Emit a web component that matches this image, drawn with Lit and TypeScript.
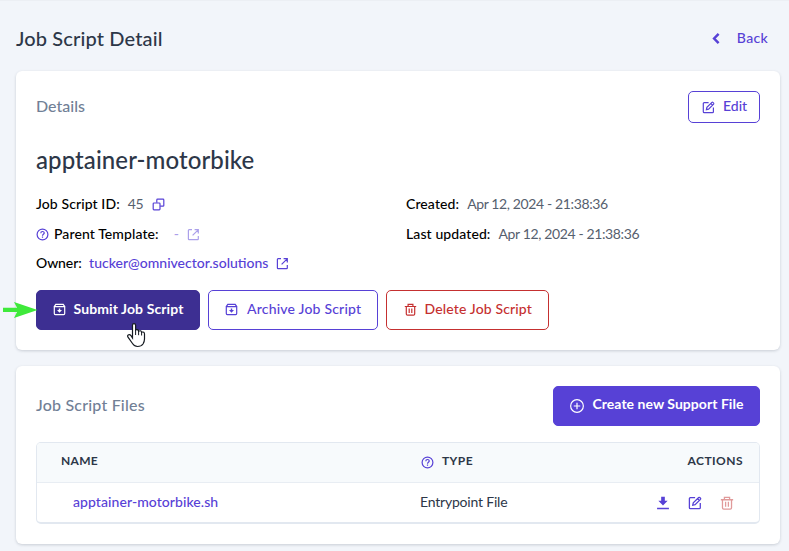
import { LitElement, html, css, svg } from "lit";
import { customElement } from "lit/decorators.js";

const icons: Record<string, unknown> = {
  back: svg`<path d="M8.6 1.8 4.1 6.5 8.6 11.2" stroke-width="2.5"/>`,
  edit: svg`<path d="M6.6 1.6H2.2Q1.3 1.6 1.3 2.5V10.8Q1.3 11.7 2.2 11.7H10.5Q11.4 11.7 11.4 10.8V6.6"/><path d="M4.4 8.6 4.9 6.4 9.9 1.4Q10.4 1 10.9 1.4L11.6 2.1Q12 2.6 11.6 3.1L6.6 8.1Z M8.9 2.6 10.5 4.2"/>`,
  archive: svg`<path d="M1.3 3.6V10.6Q1.3 11.6 2.3 11.6H10.7Q11.7 11.6 11.7 10.6V3.6Z"/><path d="M1.4 3.4 2.8 1.4H10.2L11.6 3.4"/><path d="M5.8 5.4H7.2V7H9L6.5 9.7 4 7H5.8Z" fill="currentColor" stroke="none"/>`,
  copy: svg`<rect x="1.2" y="5" width="6.8" height="6.8" rx=".8"/><path d="M4.8 4.8V2Q4.8 1.2 5.6 1.2H11Q11.8 1.2 11.8 2V7.4Q11.8 8.2 11 8.2H8.2"/>`,
  help: svg`<circle cx="6.5" cy="6.5" r="5.4"/><path d="M4.8 5.2C4.8 2.9 8.3 3 8.2 5.1C8.1 6.3 6.5 6.3 6.5 7.7M6.5 8.6V9.7"/>`,
  external: svg`<path d="M5 1.7H2.1Q1.4 1.7 1.4 2.4V10.9Q1.4 11.6 2.1 11.6H10.6Q11.3 11.6 11.3 10.9V8M7.6 1.7H11.3V5.4M11.2 1.8 5.6 7.4"/>`,
  trash: svg`<path d="M.8 3.5H12.2M4.1 3.4V1.3H8.9V3.4M2.3 3.5V10.9Q2.3 12.1 3.5 12.1H9.5Q10.7 12.1 10.7 10.9V3.5M5.2 5.4V10M7.8 5.4V10"/>`,
  plus: svg`<circle cx="6.5" cy="6.5" r="5.9"/><path d="M6.5 3.5V9.5M3.5 6.5H9.5"/>`,
  download: svg`<path d="M4.8 .8H8.2V4.3H10.8L6.5 8.8 2.2 4.3H4.8Z" fill="currentColor" stroke="none"/><path d="M1 11.6H12" stroke-width="1.3"/>`,
};

const icon = (name: string, cls = "") =>
  html`<svg class="icon ${cls}" viewBox="0 0 13 13">${icons[name]}</svg>`;

@customElement("app-root")
export class AppRoot extends LitElement {
  static styles = css`
    :host {
      display: block;
      box-sizing: border-box;
      height: 551px;
      overflow: hidden;
      padding: 0 9px 0 16px;
      border-top: 1px solid #eceff4;
      background: #f2f5fa;
      font: 500 14px/20px Lato, "Liberation Sans", sans-serif;
      color: #000;
      white-space: nowrap;
    }
    * { box-sizing: border-box; }
    .icon {
      width: 13px;
      height: 13px;
      flex: none;
      overflow: visible;
      fill: none;
      stroke: currentColor;
      stroke-width: 1.2;
      color: #5741d6;
    }
    .bar, .head, .row, .buttons, .btn, .tr, .back { display: flex; align-items: center; }
    .bar, .head { justify-content: space-between; }
    .bar { height: 70px; padding: 4px 12px 0 0; }
    h1, h2, h3 { margin: 0; font-weight: 500; }
    h1 { font-size: 20px; line-height: 26px; letter-spacing: 0.14px; color: #2d3748; padding-bottom: 1px; }
    .back { gap: 14px; color: #5741d6; letter-spacing: 0.32px; padding-bottom: 1px; }
    .back .icon { position: relative; top: 1px; }
    .card {
      background: #fff;
      border-radius: 6px;
      padding: 20px;
      box-shadow: 0 1px 3px rgba(40, 50, 70, 0.2);
    }
    .details { height: 279px; margin-bottom: 16px; }
    .files { height: 178px; }
    .head { align-items: flex-start; }
    h2 { font-size: 16px; line-height: 30px; color: #718096; }
    .files h2 { line-height: 38px; letter-spacing: 0.2px; }
    h3 { font-size: 24px; line-height: 30px; margin-top: 22px; letter-spacing: 0.08px; color: #2d3748; }
    .btn {
      height: 40px;
      border: 1px solid currentColor;
      border-radius: 5px;
      padding: 0 0 3px 16px;
      gap: 8px;
      color: #5741d6;
    }
    .btn .icon { color: inherit; position: relative; top: 1px; }
    .edit { width: 72px; height: 32px; padding: 0 0 2px 13px; }
    .submit { width: 164px; background: #3d2f92; border-color: #3d2f92; letter-spacing: 0.1px; font-weight: 700; padding-left: 15.5px; }
    .archive { width: 170px; letter-spacing: 0.2px; gap: 9px; }
    .delete { width: 163px; color: #c53030; letter-spacing: 0.15px; padding-left: 16.5px; }
    .create { width: 207px; background: #5741d6; border-color: #5741d6; font-weight: 700; letter-spacing: 0.04px; padding-bottom: 4px; }
    .submit span, .create span { color: #fff; }
    .submit .icon, .create .icon { color: #fff; }
    .create .icon { width: 14px; height: 14px; stroke-width: 1.1; top: 2px; }
    .create span { margin-left: 0.5px; }
    .facts { display: grid; grid-template-columns: 370px 1fr; margin-top: 19px; height: 96px; align-items: start; }
    .row { height: 29.5px; letter-spacing: 0.1px; align-items: flex-start; }
    .row .icon { margin-top: 4px; }
    .label { margin-right: 8px; }
    .owner .label { letter-spacing: -0.1px; margin-right: 7.5px; }
    .value { color: #56606e; font-weight: 400; letter-spacing: -0.37px; }
    .value + .icon { margin-left: 8.5px; }
    .parent .icon { margin-right: 5px; }
    .parent .label { margin-right: 15px; }
    .faded { opacity: 0.5; }
    .dash { color: #5741d6; width: 5px; margin-right: 8px; }
    .link { color: #5741d6; letter-spacing: 0; }
    .row .link + .icon { margin-left: 8px; }
    .buttons { gap: 8px; }
    .table { margin-top: 16px; border: 1px solid #e2e8f0; border-bottom-width: 2px; border-radius: 5px; overflow: hidden; height: 82px; }
    .tr { height: 39px; }
    .th { height: 40px; padding: 0 16px 3px 24px; background: #f7fafc; border-bottom: 1px solid #e8edf3; font-size: 12px; font-weight: 700; color: #2d3748; }
    .td { padding: 0 25px 0 36px; }
    .th .name { width: 360px; letter-spacing: 0.3px; }
    .td .name { width: 347px; letter-spacing: 0.07px; }
    .type { display: flex; align-items: center; gap: 8px; flex: 1; letter-spacing: 0.42px; }
    .th .icon { position: relative; top: 1px; left: -0.5px; }
    .th .actions { letter-spacing: 0.46px; }
    .td .name, .td .type { padding-bottom: 1px; }
    .td .type { color: #2d3748; font-weight: 400; letter-spacing: -0.2px; }
    .td .actions { display: flex; gap: 18px; }
    .td .actions .icon { width: 14px; height: 14px; }
    .td .actions .trash { color: #e09a9a; }
    .arrow { position: absolute; left: 3px; top: 301px; width: 35px; height: 18px; }
    .hand { position: absolute; left: 126px; top: 322px; width: 20px; height: 26px; }
  `;

  render() {
    return html`
      <div class="bar">
        <h1>Job Script Detail</h1>
        <div class="back">${icon("back")}<span>Back</span></div>
      </div>
      <section class="card details">
        <div class="head">
          <h2>Details</h2>
          <div class="btn edit">${icon("edit")}<span>Edit</span></div>
        </div>
        <h3>apptainer-motorbike</h3>
        <div class="facts">
          <div>
            <div class="row"><span class="label">Job Script ID:</span><span class="value">45</span>${icon("copy")}</div>
            <div class="row parent">${icon("help")}<span class="label">Parent Template:</span><span class="dash faded">-</span>${icon("external", "faded")}</div>
            <div class="row owner"><span class="label">Owner:</span><span class="link">tucker@omnivector.solutions</span>${icon("external")}</div>
          </div>
          <div>
            <div class="row"><span class="label">Created:</span><span class="value">Apr 12, 2024 - 21:38:36</span></div>
            <div class="row"><span class="label">Last updated:</span><span class="value">Apr 12, 2024 - 21:38:36</span></div>
          </div>
        </div>
        <div class="buttons">
          <div class="btn submit">${icon("archive")}<span>Submit Job Script</span></div>
          <div class="btn archive">${icon("archive")}<span>Archive Job Script</span></div>
          <div class="btn delete">${icon("trash")}<span>Delete Job Script</span></div>
        </div>
      </section>
      <section class="card files">
        <div class="head">
          <h2>Job Script Files</h2>
          <div class="btn create">${icon("plus")}<span>Create new Support File</span></div>
        </div>
        <div class="table">
          <div class="tr th"><span class="name">NAME</span><span class="type">${icon("help")}TYPE</span><span class="actions">ACTIONS</span></div>
          <div class="tr td"><span class="name link">apptainer-motorbike.sh</span><span class="type">Entrypoint File</span>
            <span class="actions">${icon("download")}${icon("edit")}${icon("trash", "trash")}</span></div>
        </div>
      </section>
      <svg class="arrow" viewBox="0 0 35 18">
        <path d="M0 6.8H14L11 1 34.5 9 11 17 14 11H0Z" fill="#3fe93b" />
      </svg>
      <svg class="hand" viewBox="0 0 20 26">
        <path d="M6.5 16V3.2Q6.5 1.6 8 1.6T9.6 3.2V8.4Q10.2 7.2 11.4 7.6 12.5 8 12.6 9.2 14.8 7.9 15.6 10.2 18.5 9.4 18.5 12V17Q18.5 19.5 17 22 15.3 24.5 11.5 24.5 8.5 24.5 6.5 21.5L2 15.2Q1 13.4 2.6 12.8 4 12.4 5 13.7Z" fill="#fff" stroke="#151a20" stroke-width="1.2" />
        <path d="M9.6 8V13M12.6 9V13.2M15.6 10V13.5" fill="none" stroke="#151a20" />
      </svg>
    `;
  }
}
